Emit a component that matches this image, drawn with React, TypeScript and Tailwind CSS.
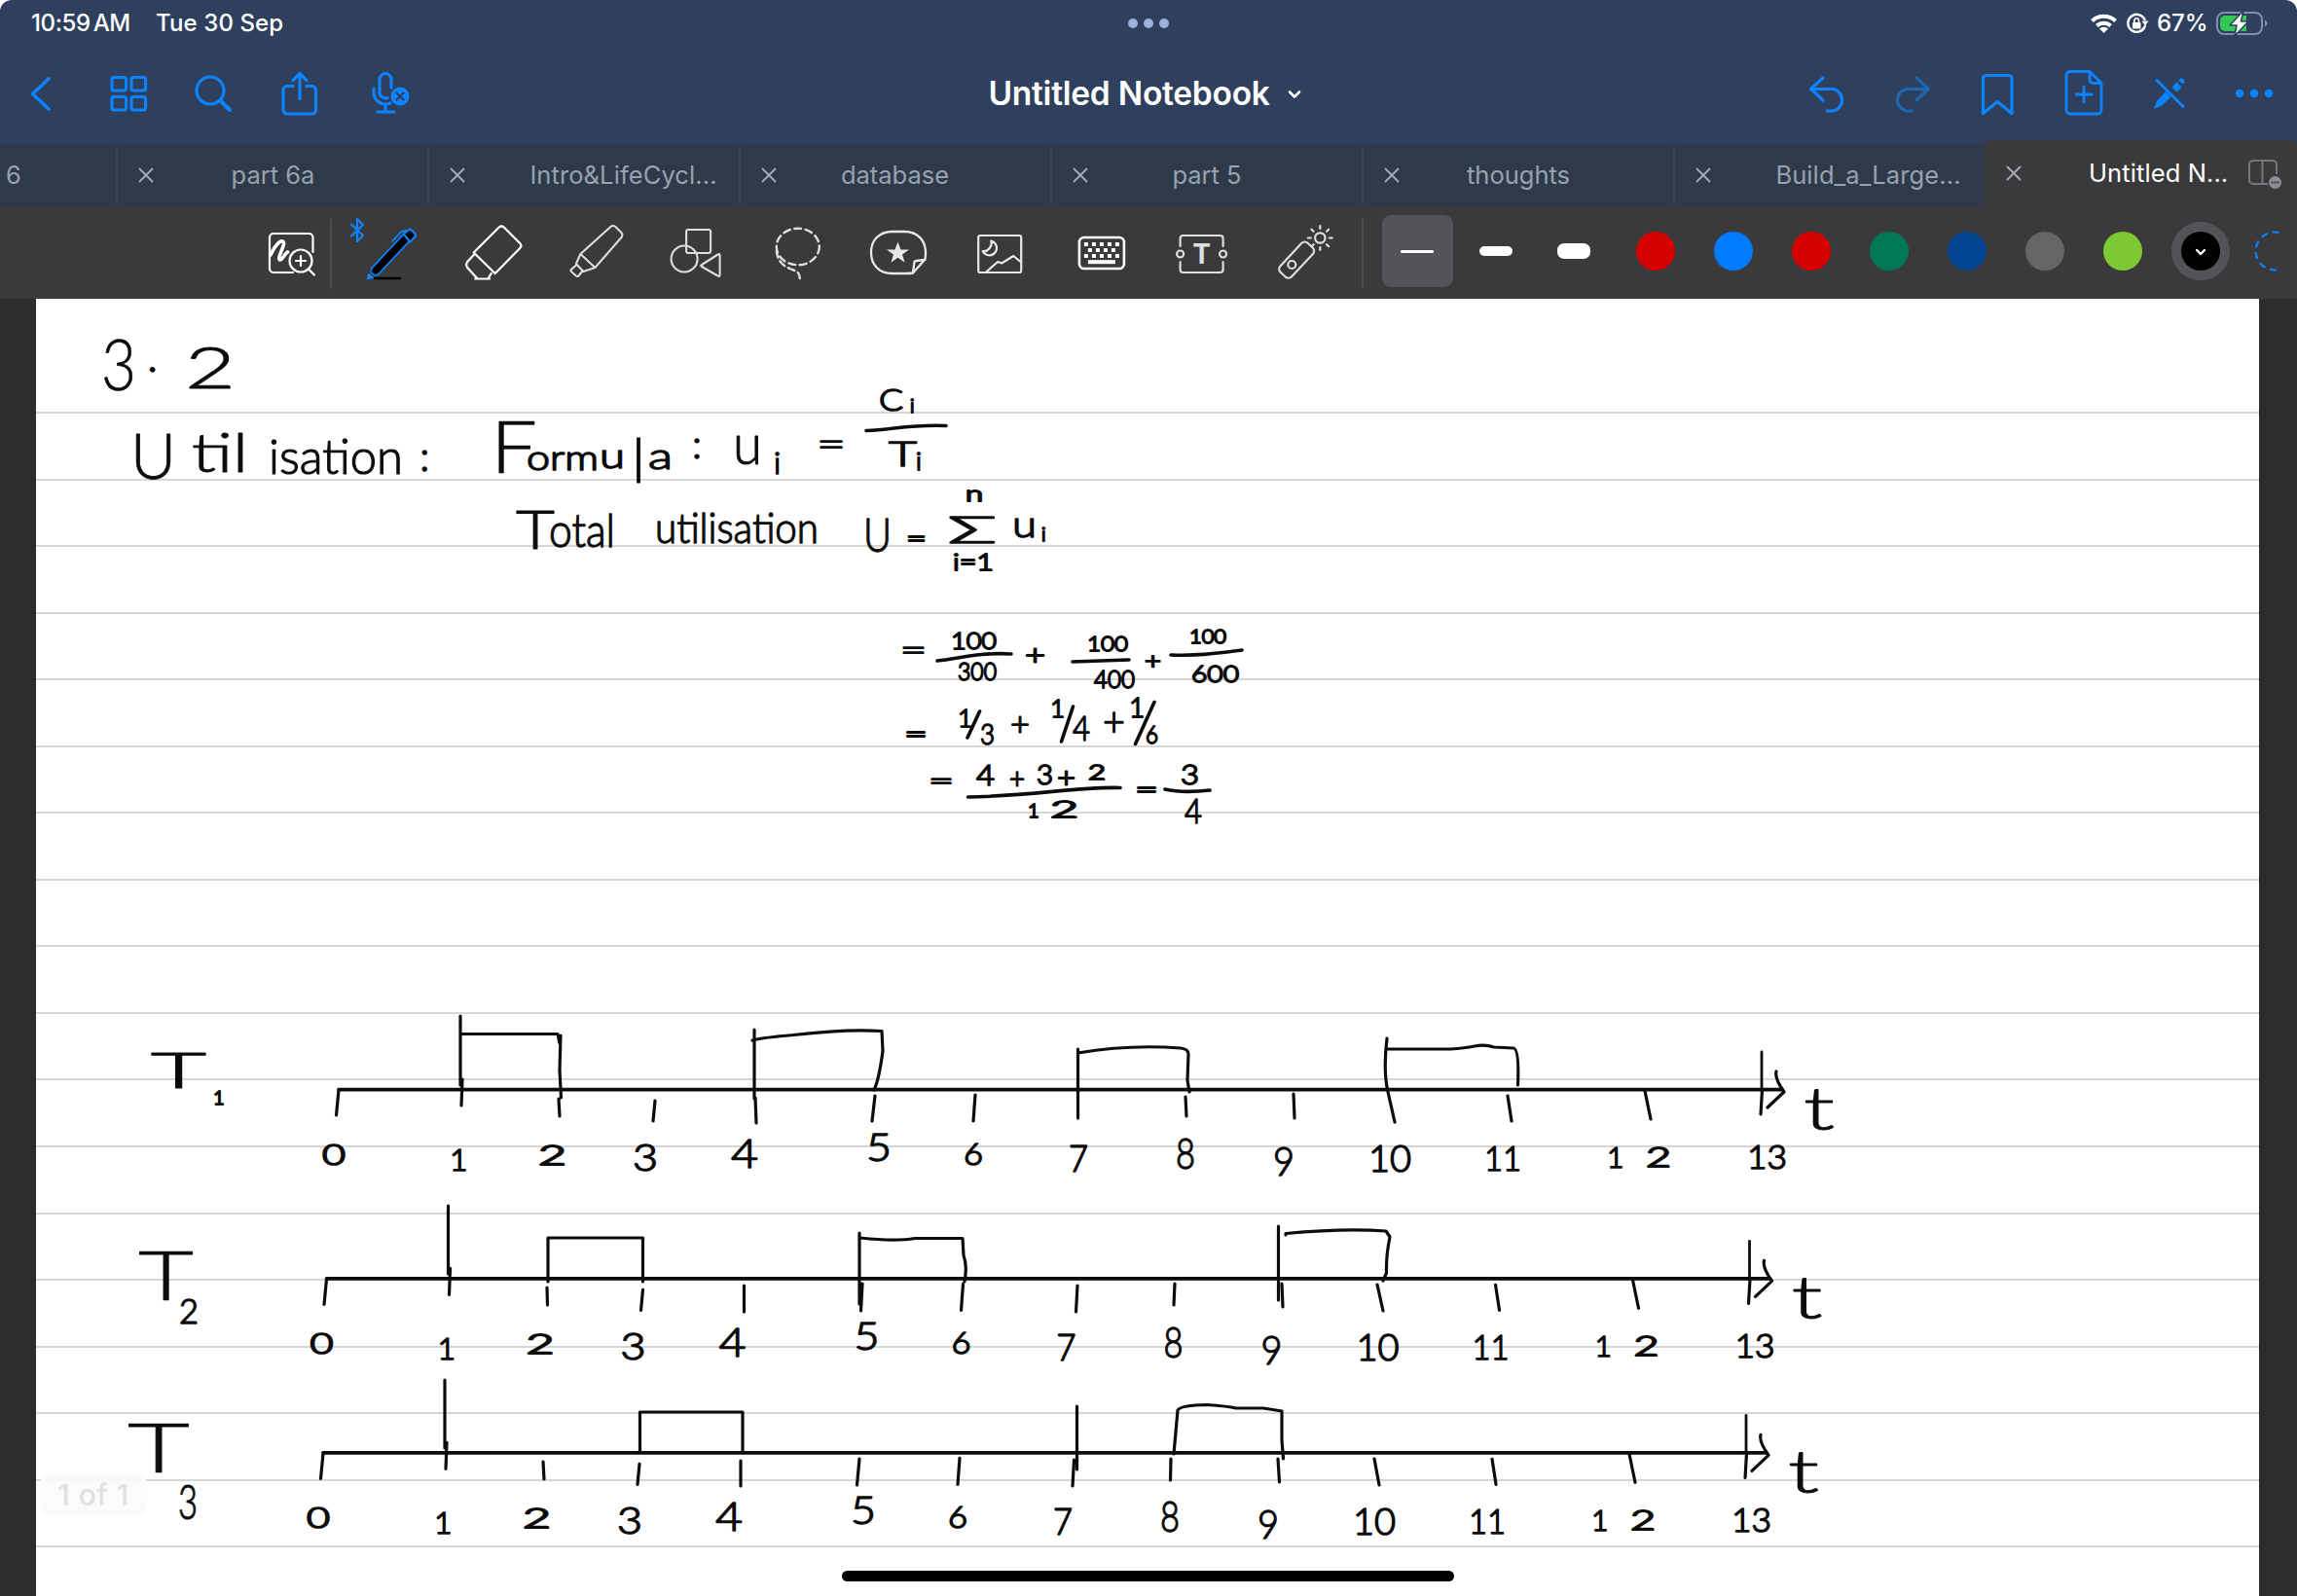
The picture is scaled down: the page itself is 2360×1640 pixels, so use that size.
import React from "react";

const BLUE = "#0d84ff";

type SlotProps = { x: number; w: number; y: number; h: number; children: React.ReactNode; color?: string; sw?: number };

/** One icon cell; the drawing uses the bar's own coordinate space. */
function Slot({ x, w, y, h, children, color = "#fff", sw = 2.6 }: SlotProps) {
  return (
    <svg
      className="block shrink-0"
      width={w}
      height={h}
      viewBox={`${x} ${y} ${w} ${h}`}
      fill="none"
      stroke={color}
      strokeWidth={sw}
      strokeLinecap="round"
      strokeLinejoin="round"
    >
      {children}
    </svg>
  );
}

function StatusBar() {
  return (
    <div className="grid h-[48px] grid-cols-3 items-center text-[24px] font-medium text-white">
      <div className="flex gap-[22px] pl-[32px]">
        <span className="w-[106px] whitespace-nowrap tracking-[-0.4px] [word-spacing:-3px]">10:59 AM</span>
        <span className="whitespace-nowrap tracking-[0.1px]">Tue 30 Sep</span>
      </div>
      <div className="flex justify-center gap-[6px]">
        <i className="size-[10px] rounded-full bg-[#9db0d8]" />
        <i className="size-[10px] rounded-full bg-[#9db0d8]" />
        <i className="size-[10px] rounded-full bg-[#9db0d8]" />
      </div>
      <div className="flex items-center justify-end">
        <Slot x={2142} w={72} y={0} h={48} sw={4}>
          <path d="M2149.5 21.5a17.5 17.5 0 0 1 24 0M2154.5 26.5a10.500 10.500 0 0 1 14 0" strokeLinecap="butt" />
          <path d="M2161.500 34l-4.500-4.500a6.500 6.500 0 0 1 9 0z" fill="#fff" stroke="none" />
          <path d="M2203.500 20a9 9 0 1 0 .3 7" strokeWidth="2.400" />
          <path d="M2200.500 21.500h7l-3.500 5z" fill="#fff" stroke="none" />
          <rect x="2191" y="23" width="8.500" height="6.500" rx="1" fill="#fff" stroke="none" />
          <path d="M2193 23v-2a2.200 2.200 0 0 1 4.400 0v2" strokeWidth="1.600" />
        </Slot>
        <span className="w-[60px] whitespace-nowrap pl-[2px]">67%</span>
        <Slot x={2274} w={86} y={0} h={48} sw={2}>
          <rect x="2278" y="13" width="46" height="22" rx="7" stroke="#8290ab" />
          <path d="M2286 16h22v16h-22a5 5 0 0 1-5-5v-6a5 5 0 0 1 5-5z" fill="#31c859" stroke="none" />
          <path d="M2327 20.500q2.500 1 2.500 3.500t-2.500 3.500z" fill="#8290ab" stroke="none" />
          <path d="M2305 11l-14 15h7l-2 11 14-15h-7.500z" fill="#fff" stroke="#2f3f5e" strokeWidth="1.500" />
        </Slot>
      </div>
    </div>
  );
}

function NavBar() {
  const s = { y: 48, h: 96, color: BLUE, sw: 3.2 };
  return (
    <div className="flex h-[96px] items-center justify-between">
      <div className="flex w-[528px]">
        <Slot x={0} w={88} {...s}><path d="M50 81L33.500 96.500 50 112" strokeWidth="3.600" /></Slot>
        <Slot x={88} w={88} {...s}>
          <rect x="115" y="79.500" width="14.500" height="13.500" rx="2" />
          <rect x="135" y="79.500" width="14.500" height="13.500" rx="2" />
          <rect x="115" y="99.500" width="14.500" height="13.500" rx="2" />
          <rect x="135" y="99.500" width="14.500" height="13.500" rx="2" />
        </Slot>
        <Slot x={176} w={88} {...s}>
          <circle cx="216" cy="93" r="14" />
          <path d="M226.500 103.500l9.500 9.500" strokeWidth="4" />
        </Slot>
        <Slot x={264} w={88} {...s}>
          <path d="M301 88.500h-6a4 4 0 0 0-4 4V113a4 4 0 0 0 4 4h25.500a4 4 0 0 0 4-4V92.500a4 4 0 0 0-4-4H315M308 101.500V76M301 82.500l7-7 7 7" />
        </Slot>
        <Slot x={352} w={88} {...s}>
          <path d="M402 90v-8.500a6 6 0 0 0-12 0V95a6 6 0 0 0 8 5.500M384 91v4a12 12 0 0 0 12 12q2.500 0 5-1M396 107.500v7.500M388 115h17" />
          <circle cx="411" cy="99" r="9.500" fill={BLUE} stroke="none" />
          <path d="M407.500 95.500l7 7m0-7l-7 7" stroke="#2f3f5e" strokeWidth="2.400" />
        </Slot>
      </div>
      <div className="mr-[8px] mt-[2px] flex items-center gap-[18px] text-white">
        <h1 className="whitespace-nowrap text-[33.500px] leading-none font-semibold tracking-[-0.25px]">Untitled Notebook</h1>
        <svg width="14" height="10" viewBox="0 0 14 10" fill="none" stroke="#fff" strokeWidth="2.600" strokeLinecap="round" strokeLinejoin="round">
          <path d="M2 2.500l5 5 5-5" />
        </svg>
      </div>
      <div className="flex w-[528px]">
        <Slot x={1832} w={88} {...s}><path d="M1873 80l-12.500 11.500 12.500 11.500M1861 91.500h22.500a11.500 11.500 0 0 1 0 22.500H1877" /></Slot>
        <Slot x={1920} w={88} {...s} color="#1d66b0"><path d="M1969 80l12.500 11.500-12.500 11.500M1981 91.500h-22.500a11.500 11.500 0 0 0 0 22.500h6" /></Slot>
        <Slot x={2008} w={88} {...s}><path d="M2037.500 80.500a3 3 0 0 1 3-3h23.500a3 3 0 0 1 3 3V116.500L2052.300 104.500 2037.500 116.500z" /></Slot>
        <Slot x={2096} w={88} {...s}>
          <path d="M2147 73.500h-20a4 4 0 0 0-4 4V113a4 4 0 0 0 4 4h28a4 4 0 0 0 4-4V85.500zM2147 74v8a3.500 3.500 0 0 0 3.500 3.500h8M2141 89v16M2133 97h16" strokeWidth="2.800" />
        </Slot>
        <Slot x={2184} w={88} {...s}>
          <path d="M2216 82.500l27 27" strokeWidth="3" />
          <path d="M2225 94l5.500 5.500-9.500 9-8 3.500 3-8zM2231.500 89.500l5-5 5 5-5 5zM2238.500 83q2.500-4 5-1.500t-1 5z" fill={BLUE} stroke="none" />
        </Slot>
        <Slot x={2272} w={88} {...s}>
          <g fill={BLUE} stroke="none"><circle cx="2301" cy="96" r="4.200" /><circle cx="2316" cy="96" r="4.200" /><circle cx="2331" cy="96" r="4.200" /></g>
        </Slot>
      </div>
    </div>
  );
}

function Cross() {
  return (
    <svg width="16" height="16" viewBox="0 0 16 16" fill="none" stroke="#a3abb6" strokeWidth="1.900" strokeLinecap="round">
      <path d="M1.500 1.500l13 13m0-13l-13 13" />
    </svg>
  );
}

const TABS = [
  { name: "part 6a", pad: "pr-[36px]" },
  { name: "Intro&LifeCycl...", pad: "pl-[44px] tracking-[0.1px]" },
  { name: "database", pad: "pr-[38px]" },
  { name: "part 5", pad: "pr-[37px]" },
  { name: "thoughts", pad: "pr-[37px]" },
  { name: "Build_a_Large...", pad: "pl-[42px] tracking-[0.1px]" },
];

function TabBar() {
  return (
    <div className="flex h-[68px] items-end text-[25.500px] text-[#98a1ae]">
      <div className="flex h-[64px] w-[119px] items-center bg-[#2e3a4a] pl-[6px]">6</div>
      {TABS.map((t) => (
        <div key={t.name} className="flex h-[64px] w-[320px] items-center border-l-2 border-[#364254] bg-[#2e3a4a] pl-[21px]">
          <Cross />
          <span className={`flex-1 whitespace-nowrap text-center ${t.pad}`}>{t.name}</span>
        </div>
      ))}
      <div className="flex h-[68px] w-[321px] items-center rounded-t-[6px] bg-[#3a3a3c] pl-[22px] text-white">
        <Cross />
        <span className="ml-[69px] w-[140px] whitespace-nowrap tracking-[0.1px]">Untitled N...</span>
        <svg className="ml-[21px]" width="40" height="40" viewBox="2308 157 40 40" fill="none" stroke="#76767a" strokeWidth="2">
          <path d="M2331 188h-15a4 4 0 0 1-4-4v-16a4 4 0 0 1 4-4h20a4 4 0 0 1 4 4v10M2325.500 164v24" />
          <circle cx="2338.500" cy="186.500" r="6.500" fill="#8e8e92" stroke="none" />
          <path d="M2334.500 186.500h8" stroke="#3a3a3c" strokeWidth="2" strokeDasharray="2 1" />
        </svg>
      </div>
    </div>
  );
}

const SWATCHES = ["#d50000", "#007aff", "#d50000", "#007853", "#00448f", "#656565", "#7cc933"];

function ToolBar() {
  const s = { y: 212, h: 95, w: 104.3 };
  const rays = [0, 45, 90, 135, 180, 225, 270, 315];
  return (
    <div className="flex h-[95px] items-center overflow-hidden bg-[#3a3a3c]">
      <Slot x={0} w={350} y={212} h={95} sw={2.200}>
        <path d="M321.500 259V244a4 4 0 0 0-4-4H281a4 4 0 0 0-4 4V276a4 4 0 0 0 4 4H301" />
        <path d="M278 262c4-9 10-16 13-13.500 3 2-7 17-3.500 18.500 3 0 4-5 8-8" strokeWidth="3.600" />
        <circle cx="309" cy="268" r="11.500" />
        <path d="M309 263v10M304 268h10M317 276.500l6 6" />
        <path d="M340 225v71" stroke="#4e4e51" strokeWidth="2" />
      </Slot>
      <Slot x={350} {...s}>
        <path d="M361 230.500l12 11.500-6 6V225l6 6-12 11.500" stroke={BLUE} strokeWidth="2.200" />
        <path d="M385 286H411" stroke="#000" strokeWidth="2.400" />
        <path d="M416 246L386 278" stroke={BLUE} strokeWidth="11" />
        <path d="M416 246L386 278" stroke="#000" strokeWidth="7.600" />
        <path d="M414.500 240.500l6.500-5q5 2.500 6 7l-5.500 6z" fill="#000" stroke={BLUE} strokeWidth="2" />
        <path d="M377.500 286.500l1.500-5 4 4z" fill={BLUE} stroke={BLUE} strokeWidth="1.500" />
        <path d="M417 237L412.500 238 403 248" stroke={BLUE} strokeWidth="1.800" />
      </Slot>
      <Slot x={454.300} {...s} sw={2.200}>
        <path d="M513 233.500q2.500-2 5 0l16.500 16.500q2.500 2.500 0 5L509 281 487 259.500zM487 262l-6.500 7q-2 3 0 6l10 11M505 281l-3 5M488.500 286.500h15" />
      </Slot>
      <Slot x={558.600} {...s} color="#ddd" sw={2.100}>
        <path d="M627 233q2.500-2 5 0l6 6q2 2.500 0 5L611 275 596 261zM596 261l-4.500 10 7.500 8 12-4M591.500 272.500l-5 4.500q-1 1 0 2l5 4.500q1.500 1 2.500 0l4-5" />
      </Slot>
      <Slot x={662.900} {...s} color="#ddd" sw={2.100}>
        <rect x="705" y="236" width="25" height="24" rx="2" />
        <circle cx="703" cy="266" r="13.500" />
        <path d="M737.500 261.500q2-1 2 1v20q0 2-2 1L721 274q-2-1 0-2z" />
      </Slot>
      <Slot x={767.200} {...s} color="#ddd" sw={2.400}>
        <ellipse cx="820" cy="253.500" rx="22" ry="18.800" strokeDasharray="7 4.500" />
        <path d="M798 258c1 10 6 15 16 19 6 2 8 4 8 9" strokeDasharray="7 4" />
      </Slot>
      <Slot x={871.500} {...s} color="#e8e8e8" sw={2.300}>
        <path d="M917 238h12c14 0 22 9 22 22 0 4 0 5-1 7l-12 13.500c-3 .5-5 .5-8 .5h-13c-14 0-22-9-22-21.500S903 238 917 238zM938 280l1.500-11q.5-1 2-1l9-1" transform="translate(0.500 0)" />
        <path d="M923 248.500l3 8h8.500l-7 5 2.600 8.200-7.100-5-7.100 5 2.600-8.200-7-5h8.500z" fill="#e8e8e8" stroke="none" />
      </Slot>
      <Slot x={975.800} {...s} color="#e8e8e8" sw={2.200}>
        <rect x="1005" y="242" width="44" height="38" rx="2" />
        <path d="M1018 247.500a7.500 7.500 0 1 1-8.500 10.500q4 1 7-3t1.500-7.500zM1013 279.500l12-10.500 4 1.500 12-7.500 8 6.500" />
      </Slot>
      <Slot x={1080.100} {...s}>
        <rect x="1109" y="244" width="46" height="32" rx="5" />
        <path d="M1114 251h38M1114 263h38" strokeWidth="4" strokeLinecap="butt" strokeDasharray="4 4" />
        <path d="M1118 257h30" strokeWidth="4" strokeLinecap="butt" strokeDasharray="4 4" />
        <path d="M1118 269.200h28" strokeWidth="4" strokeLinecap="butt" />
      </Slot>
      <Slot x={1184.400} {...s} color="#ddd" sw={2.200}>
        <path d="M1213 253v-8a3 3 0 0 1 3-3h38a3 3 0 0 1 3 3v8M1213 269v8a3 3 0 0 0 3 3h38a3 3 0 0 0 3-3v-8" />
        <circle cx="1213" cy="261" r="3.500" /><circle cx="1257" cy="261" r="3.500" />
        <text x="1235" y="271" textAnchor="middle" fontSize="28" fontWeight="700" fill="#ddd" stroke="none">T</text>
      </Slot>
      <Slot x={1288.700} {...s} color="#ddd" sw={2.200}>
        <rect x="-8" y="-21" width="16" height="41" rx="4.500" transform="translate(1331.500 267.500) rotate(43)" />
        <circle cx="1327" cy="272" r="4" />
        <circle cx="1356" cy="244.500" r="5.200" />
        {rays.map((r) => <path key={r} d="M0-9.500v-3" transform={`translate(1356 244.500) rotate(${r})`} />)}
      </Slot>
      <div className="ml-[6px] h-[72px] w-[2px] bg-[#4e4e51]" />
      <div className="mb-[3px] flex items-center">
        <div className="ml-[19px] flex h-[74px] w-[73px] items-center justify-center rounded-[9px] bg-[#545458]">
          <i className="h-[3px] w-[34px] rounded-full bg-white" />
        </div>
        <div className="flex w-[88px] justify-center"><i className="h-[10px] w-[34px] rounded-[5px] bg-white" /></div>
        <div className="flex w-[72px] justify-center"><i className="h-[16px] w-[34px] rounded-[7px] bg-white" /></div>
        <div className="ml-[8px] flex">
          {SWATCHES.map((c, i) => (
            <div key={i} className="flex w-[80px] justify-center">
              <i className="size-[40px] rounded-full" style={{ backgroundColor: c }} />
            </div>
          ))}
        </div>
        <div className="ml-[10px] flex size-[60px] shrink-0 items-center justify-center rounded-full bg-[#545458]">
          <span className="flex size-[40px] items-center justify-center rounded-full bg-black pt-[3px]">
            <svg width="12" height="9" viewBox="0 0 12 9" fill="none" stroke="#fff" strokeWidth="2.400" strokeLinecap="round" strokeLinejoin="round"><path d="M2 2l4 4 4-4" /></svg>
          </span>
        </div>
        <Slot x={2291} w={69} y={210.500} h={92} color={BLUE} sw={2.200}>
          <path d="M2343 237.500a19.500 19.500 0 1 0 0 38" strokeDasharray="7 5" strokeLinecap="butt" transform="translate(-1.500 0)" />
        </Slot>
      </div>
    </div>
  );
}

/** [text, left, width (0 = natural), baseline, size] */
type Run = [string, number, number, number, number];

const NOTES: Run[][] = [
  [["3", 104, 36, 401, 72]],
  [[".", 151, 0, 382, 48]],
  [["2", 190, 52, 399, 60]],
  [["U", 134, 47, 492, 66]],
  [["til", 197, 58, 485, 56]],
  [["isation", 276, 138, 487, 50]],
  [[":", 431, 0, 484, 44]],
  [["F", 504, 48, 486, 74]],
  [["orm", 541, 74, 483, 36], ["u", 616, 26, 481, 36]],
  [["l", 649, 0, 496, 64]],
  [["a", 666, 25, 482, 38]],
  [[":", 711, 0, 471, 42]],
  [["u", 753, 30, 477, 58]],
  [["i", 795, 0, 487, 32]],
  [["=", 839, 30, 469, 38]],
  [["C", 903, 25, 422, 32]],
  [["i", 935, 0, 424, 20]],
  [["T", 913, 29, 479, 36]],
  [["i", 941, 0, 483, 26]],
  [["T", 530, 40, 564, 56]],
  [["otal", 564, 68, 562, 48]],
  [["utilisation", 673, 168, 558, 44]],
  [["U", 887, 29, 567, 48]],
  [["=", 931, 21, 562, 26]],
  [["Σ", 974, 50, 558, 37]],
  [["n", 992, 18, 515, 22]],
  [["i=1", 979, 42, 586, 24]],
  [["u", 1040, 25, 552, 38]],
  [["i", 1070, 0, 556, 20]],
  [["=", 925, 27, 678, 30]],
  [["100", 977, 47, 667, 24]],
  [["300", 984, 40, 699, 26]],
  [["+", 1053, 21, 683, 28]],
  [["100", 1117, 42, 669, 22]],
  [["400", 1124, 42, 707, 25]],
  [["+", 1176, 17, 687, 24]],
  [["100", 1222, 38, 661, 20]],
  [["600", 1224, 49, 701, 24]],
  [["=", 929, 24, 763, 26]],
  [["1", 984, 0, 747, 26]],
  [["3", 1007, 15, 765, 30]],
  [["+", 1038, 20, 756, 34]],
  [["1", 1079, 0, 737, 26]],
  [["4", 1102, 18, 761, 35]],
  [["+", 1133, 23, 756, 42]],
  [["1", 1160, 0, 737, 28]],
  [["6", 1177, 13, 764, 25]],
  [["=", 954, 26, 812, 28]],
  [["4", 1003, 19, 807, 30]],
  [["+", 1037, 16, 811, 30]],
  [["3", 1065, 17, 806, 27]],
  [["+", 1086, 19, 809, 28]],
  [["2", 1118, 18, 801, 22]],
  [["1", 1056, 0, 840, 20], ["2", 1079, 29, 840, 24]],
  [["=", 1166, 24, 820, 26]],
  [["3", 1213, 19, 806, 28]],
  [["4", 1217, 18, 846, 36]],
  [["T", 155, 57, 1118, 52]],
  [["1", 219, 0, 1135, 20]],
  [["T", 142, 57, 1336, 70]],
  [["2", 184, 20, 1360, 36]],
  [["T", 131, 64, 1513, 70]],
  [["3", 183, 20, 1561, 50]],
];

const FRACTION_BARS =
  "M890 442.500C920 441 935 436 972 437.500M963 679C985 677 1005 670 1039 672M1102 680L1160 678M1203 673C1230 674 1245 672 1276 668M994.500 819C1060 818 1110 808 1151 809.500M1197 811C1210 814 1225 814 1243 812M1006.500 731L994 758M1102.500 726L1090.500 762M1186 721.500L1166.500 764.500";

const AXIS_LABELS: Run[] = [
  ["0", 331, 24, 1197, 29],
  ["1", 462, 0, 1203, 32],
  ["2", 553, 29, 1197, 27],
  ["3", 650, 26, 1203, 38],
  ["4", 751, 28, 1200, 41],
  ["5", 890, 26, 1193, 40],
  ["6", 990, 20, 1197, 32],
  ["7", 1098, 20, 1204, 37],
  ["8", 1208, 20, 1201, 43],
  ["9", 1308, 22, 1208, 42],
  ["10", 1406, 44, 1204, 37],
  ["11", 1525, 38, 1203, 35],
  ["1", 1651, 0, 1200, 30],
  ["2", 1691, 26, 1199, 27],
  ["13", 1795, 41, 1201, 34],
  ["t", 1853, 32, 1161, 62],
];

const AXIS_SHAPE =
  "M348 1120L345.500 1146M475 1109L474 1136M1690 1121L1696 1150M1549 1126L1553 1152M1810.500 1120L1809 1145M1825 1101Q1823 1108 1833 1122L1816 1138M673 1131L671 1152M1002 1125L1000 1152";

const TIMELINES = [
  {
    dx: 0,
    dy: 0,
    marks:
      "M473 1044V1115M474 1062.500H573L575 1072M576 1064L575 1100 576.500 1128M574 1129L575 1147M775 1058V1129M776 1128L777 1154M773 1069Q785 1066 815 1063.500 870 1057 906 1059.500L907 1080Q903 1110 898 1120M899 1126L896 1152M1107.500 1078V1149M1107.500 1082Q1160 1073 1213 1077 1221 1078 1221 1083L1220 1110 1222 1122M1218 1127L1219 1147M1329 1124L1330 1149M1425 1067Q1421 1100 1426 1122L1433 1153M1426 1078H1490Q1505 1077 1515 1075 1525 1073 1535 1076L1555 1077Q1561 1078 1559.500 1115",
  },
  {
    dx: -12.5,
    dy: 194.3,
    marks:
      "M460.500 1239V1309M563 1317V1272H660.500V1317M562 1323L562.500 1341M764.500 1321V1348M883 1267V1340M884 1272Q920 1276 940 1272.500H989L990 1290Q994 1300 991 1317M886 1319L884.500 1347M1107 1321L1105.500 1348M1207 1319L1206 1341M1313.500 1260V1336M1317 1319L1318 1343M1321 1269V1267.500Q1380 1262 1424 1265L1428 1271Q1424 1290 1424.500 1308L1421 1316M1415 1320L1421 1347",
  },
  {
    dx: -16,
    dy: 373.3,
    marks:
      "M457 1418V1488M657.500 1492V1451H763V1492M558 1502L559 1520M761 1501L761 1527M883 1499L880.500 1526M1106.500 1445V1510M1103.500 1500L1102 1527M1206 1494L1210 1449Q1213 1444 1240 1443.500 1262 1445 1270 1447H1298L1317 1450V1480L1318.500 1499M1203 1499L1202.500 1521M1313 1499L1314.500 1523M1412 1499L1417 1526",
  },
];

/** Pen writing: the outline width evens out the line weight across sizes. */
function InkWord({ runs }: { runs: Run[] }) {
  return (
    <g fill="#0c0c0c" fontFamily="Lato, sans-serif" fontWeight="300">
      {runs.map(([text, x, w, y, size], i) => (
        <text
          key={i}
          x={x}
          y={y}
          fontSize={size}
          strokeWidth={Math.max(0.6, 2.5 - size * 0.026)}
          {...(w ? { textLength: w, lengthAdjust: "spacingAndGlyphs" as const } : {})}
        >
          {text}
        </text>
      ))}
    </g>
  );
}

function Page() {
  const rules = Array.from({ length: 17 }, (_, i) => i);
  return (
    <main className="relative h-[1333px] bg-[#2c2c2e] px-[37px]">
      <div className="h-full w-[2284px] overflow-hidden bg-white">
        <div className="h-[118px] border-b-2 border-[#d6d6d6]" />
        {rules.map((i) => <div key={i} className="h-[68.560px] border-b-2 border-[#d6d6d6]" />)}
      </div>
      <div className="absolute top-[1207px] left-[41px] flex h-[44px] w-[110px] items-center justify-center rounded-[12px] bg-[#fbfbfb]/90 text-[30px] font-medium tracking-[0.5px] text-[#e0e0e0]">1 of 1</div>
      <svg className="absolute top-0 left-0" width="2360" height="1333" viewBox="0 307 2360 1333" fill="none" stroke="#0c0c0c" strokeWidth="3.600" strokeLinecap="round" strokeLinejoin="round">
        <path d={FRACTION_BARS} />
        {TIMELINES.map((t) => (
          <React.Fragment key={t.dy}>
            <path d={t.marks} strokeWidth="3.200" />
            <g transform={`translate(${t.dx} ${t.dy})`}>
              <path d="M348 1119.600H1831" strokeWidth="3.600" />
              <path d={AXIS_SHAPE} strokeWidth="3.200" />
              <path d="M1810 1081V1120" strokeWidth="2.800" />
              <InkWord runs={AXIS_LABELS} />
            </g>
          </React.Fragment>
        ))}
        {NOTES.map((n, i) => <InkWord key={i} runs={n} />)}
      </svg>
      <div className="absolute bottom-[15px] left-[865px] h-[11px] w-[629px] rounded-full bg-black" />
    </main>
  );
}

export default function App() {
  return (
    <div className="h-[1640px] w-[2360px] overflow-hidden bg-white font-['Inter',sans-serif]">
      <header className="overflow-hidden rounded-t-[12px] bg-[#2f3f5e]">
        <StatusBar />
        <NavBar />
        <TabBar />
        <ToolBar />
      </header>
      <Page />
    </div>
  );
}
